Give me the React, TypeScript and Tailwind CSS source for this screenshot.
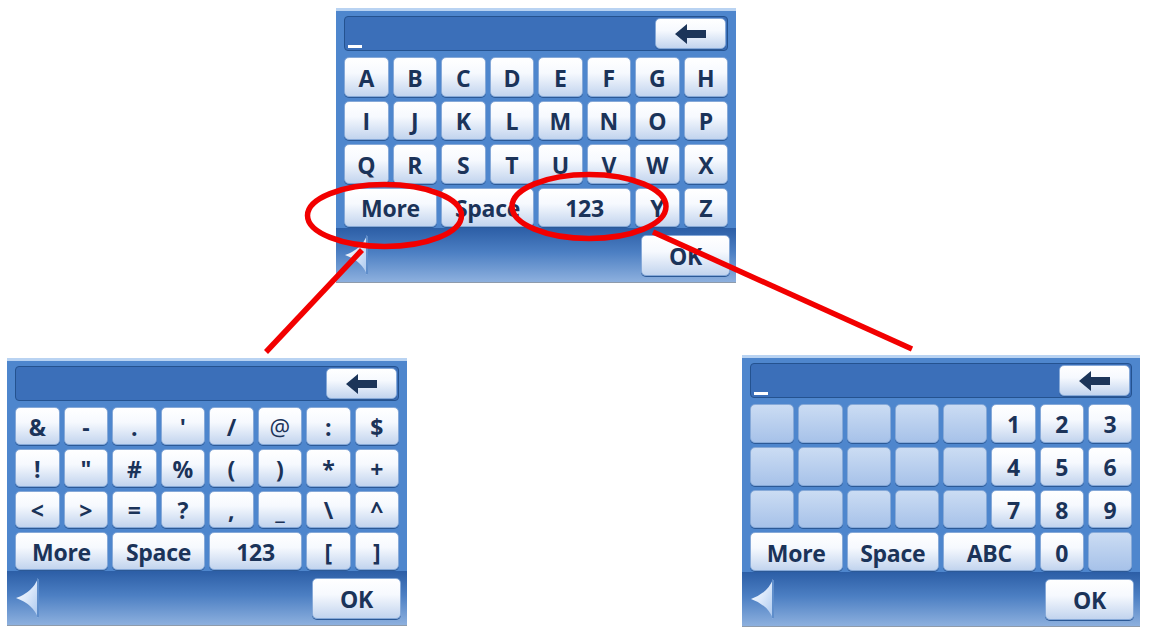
import React from "react";

type KeyDef = { label?: string; span?: 2; empty?: boolean };

const k = (label: string): KeyDef => ({ label });
const blank: KeyDef = { empty: true };

// 字母键盘
const alphaKeys: KeyDef[] = [
  ..."ABCDEFGHIJKLMNOPQRSTUVWX".split("").map(k),
  { label: "More", span: 2 },
  { label: "Space", span: 2 },
  { label: "123", span: 2 },
  k("Y"),
  k("Z"),
];

// 符号键盘
const symbolKeys: KeyDef[] = [
  ...["&", "-", ".", "'", "/", "@", ":", "$"].map(k),
  ...["!", '"', "#", "%", "(", ")", "*", "+"].map(k),
  ...["<", ">", "=", "?", ",", "_", "\\", "^"].map(k),
  { label: "More", span: 2 },
  { label: "Space", span: 2 },
  { label: "123", span: 2 },
  k("["),
  k("]"),
];

// 数字键盘
const numberKeys: KeyDef[] = [
  blank, blank, blank, blank, blank, k("1"), k("2"), k("3"),
  blank, blank, blank, blank, blank, k("4"), k("5"), k("6"),
  blank, blank, blank, blank, blank, k("7"), k("8"), k("9"),
  { label: "More", span: 2 },
  { label: "Space", span: 2 },
  { label: "ABC", span: 2 },
  k("0"),
  blank,
];

const keyFace =
  "rounded-[5px] border border-[#86a9d8] shadow-[0_1px_0_#2c5996] bg-[linear-gradient(to_bottom,#ffffff_0%,#f6f9fe_40%,#c2d4ee_100%)]";

function BackArrow() {
  return (
    <svg width="32" height="20" viewBox="0 0 32 20">
      <path d="M0 10 L12 0 L12 6 L31 6 L31 14 L12 14 L12 20 Z" fill="#1c3559" />
    </svg>
  );
}

function BackTriangle() {
  return (
    <svg width="24" height="40" viewBox="0 0 24 40">
      <defs>
        <linearGradient id="tri" x1="0" y1="0" x2="1" y2="1">
          <stop offset="0" stopColor="#ffffff" />
          <stop offset="0.5" stopColor="#dbe8fa" />
          <stop offset="1" stopColor="#a8c6ee" />
        </linearGradient>
      </defs>
      <path d="M22 0 Q17 14 0 20 Q17 26 22 40 Z" fill="url(#tri)" />
      <path d="M22 1 L22 39" stroke="#5f8ecb" strokeWidth="2" />
    </svg>
  );
}

function Key({ def }: { def: KeyDef }) {
  return (
    <div
      className={`flex items-center justify-center pt-[3px] ${def.span === 2 ? "col-span-2" : ""} ${
        def.empty
          ? "rounded-[5px] border border-[#86a9d8] shadow-[0_1px_0_#2c5996] bg-[linear-gradient(to_bottom,#cbdcf3,#a7c2e9)]"
          : keyFace
      } ${def.label === "@" ? "font-normal" : ""}`}
    >
      {def.label}
    </div>
  );
}

function Keyboard({
  keys,
  cursor,
  className,
}: {
  keys: KeyDef[];
  cursor?: boolean;
  className: string;
}) {
  return (
    <div
      className={`flex shrink-0 flex-col bg-[#4e86cd] border-t-[3px] border-t-[#b9d3f2] border-b border-b-[#8e9bab] font-['Open_Sans',sans-serif] text-[23px] font-bold leading-none tracking-[-0.3px] text-[#1b3359] ${className}`}
    >
      <div className="flex flex-1 flex-col gap-[6px] px-[8px] pt-[5px] pb-[1px]">
        {/* 输入框 + 退格键 */}
        <div className="flex h-[35px] shrink-0 rounded-[4px] border border-[#24528f] bg-[#3b6fb9]">
          <div className="relative flex-1">
            {cursor && <span className="absolute bottom-[2px] left-[3px] h-[3px] w-[14px] bg-white" />}
          </div>
          <div className={`m-[1px] flex w-[71px] items-center justify-center ${keyFace}`}>
            <BackArrow />
          </div>
        </div>
        <div className="grid flex-1 grid-cols-8 grid-rows-4 gap-[4px]">
          {keys.map((def, i) => (
            <Key key={i} def={def} />
          ))}
        </div>
      </div>
      {/* 底栏 */}
      <div className="flex h-[54px] shrink-0 items-center justify-between bg-[linear-gradient(to_bottom,#2c5ea6_0%,#4c7fc3_45%,#8db0de_100%)] pl-[9px] pr-[6px]">
        <BackTriangle />
        <div className={`flex h-[41px] w-[89px] items-center justify-center pt-[3px] ${keyFace}`}>OK</div>
      </div>
    </div>
  );
}

export default function App() {
  return (
    <div className="relative h-[632px] w-[1151px] overflow-hidden bg-white">
      <div className="flex flex-col">
        <div className="pl-[336px] pt-[8px]">
          <Keyboard keys={alphaKeys} cursor className="h-[275px] w-[400px]" />
        </div>
        <div className="flex items-start justify-between pl-[7px] pr-[11px] pt-[72px]">
          <div className="pt-[3px]">
            <Keyboard keys={symbolKeys} className="h-[268px] w-[400px]" />
          </div>
          <Keyboard keys={numberKeys} cursor className="h-[272px] w-[398px]" />
        </div>
      </div>

      {/* 红色标注 */}
      <svg
        className="pointer-events-none absolute inset-0"
        width="1151"
        height="632"
        viewBox="0 0 1151 632"
      >
        <g fill="none" stroke="#f20000" strokeWidth="5.5">
          <ellipse cx="384.5" cy="215.5" rx="77" ry="31" />
          <ellipse cx="589" cy="206.5" rx="77" ry="32" />
          <line x1="362" y1="250" x2="266" y2="352" />
          <line x1="653" y1="232" x2="912" y2="349" />
        </g>
      </svg>
    </div>
  );
}
